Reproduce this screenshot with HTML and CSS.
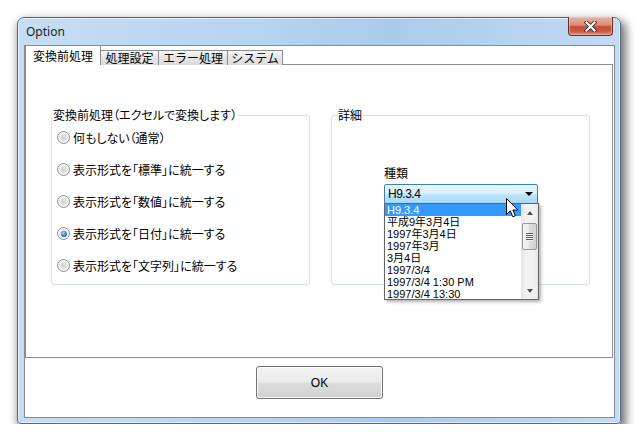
FILE: index.html
```html
<!DOCTYPE html>
<html lang="ja">
<head>
    <meta charset="UTF-8">
    <meta name="viewport" content="width=device-width, initial-scale=1.0">
    <title>Option</title>
    <link rel="stylesheet" href="styles.css">
</head>
<body>
    <div class="window">
        <div class="titlebar">
            <span class="title">Option</span>
            <span class="close">
                <svg width="13" height="11" viewBox="0 0 13 11">
                    <path d="M2.5 1.5 L10.5 9.5 M10.5 1.5 L2.5 9.5" stroke="#3b3b3b" stroke-width="4" stroke-linecap="square"/>
                    <path d="M2.5 1.5 L10.5 9.5 M10.5 1.5 L2.5 9.5" stroke="#fff" stroke-width="2" stroke-linecap="square"/>
                </svg>
            </span>
        </div>
        <div class="client">
            <div class="tabs">
                <div class="tab active" style="width:76px">変換前処理</div>
                <div class="tab" style="width:59px">処理設定</div>
                <div class="tab" style="width:70px">エラー処理</div>
                <div class="tab" style="width:56px">システム</div>
            </div>
            <div class="panel">
                <fieldset class="group group-mode">
                    <legend>変換前処理（エクセルで変換します）</legend>
                    <label class="option"><span class="radio"></span>何もしない（通常）</label>
                    <label class="option"><span class="radio"></span>表示形式を「標準」に統一する</label>
                    <label class="option"><span class="radio"></span>表示形式を「数値」に統一する</label>
                    <label class="option"><span class="radio on"></span>表示形式を「日付」に統一する</label>
                    <label class="option"><span class="radio"></span>表示形式を「文字列」に統一する</label>
                </fieldset>
                <fieldset class="group group-detail">
                    <legend>詳細</legend>
                    <div class="field-label">種類</div>
                    <div class="combo">
                        <div class="combo-box"><span>H9.3.4</span><span class="arrow"></span></div>
                        <div class="dropdown">
                            <ul class="items">
                                <li class="selected">H9.3.4</li>
                                <li>平成9年3月4日</li>
                                <li>1997年3月4日</li>
                                <li>1997年3月</li>
                                <li>3月4日</li>
                                <li>1997/3/4</li>
                                <li>1997/3/4 1:30 PM</li>
                                <li>1997/3/4 13:30</li>
                            </ul>
                            <div class="scrollbar">
                                <div class="sb-btn"><span class="tri-up"></span></div>
                                <div class="sb-thumb"><span class="grip"></span></div>
                                <div class="sb-track"></div>
                                <div class="sb-btn"><span class="tri-down"></span></div>
                            </div>
                        </div>
                        <svg class="cursor" width="13" height="20" viewBox="0 0 13 20">
                            <path d="M0.5 0.5 V16.5 L4.3 12.8 L6.8 18.8 L9.3 17.8 L6.9 12 H11.8 Z" fill="#fff" stroke="#000" stroke-width="1" stroke-linejoin="miter"/>
                        </svg>
                    </div>
                </fieldset>
            </div>
            <div class="footer">
                <button class="ok">OK</button>
            </div>
        </div>
    </div>
</body>
</html>
```

FILE: styles.css
```css
* {
    box-sizing: border-box;
}
body {
    margin: 0;
    background: #fff;
    font-family: "Noto Sans CJK JP", sans-serif;
    font-size: 12px;
    color: #000;
}
.window {
    width: 604px;
    height: 407px;
    margin: 17px 0 0 17px;
    padding: 0 5px 5px 6px;
    display: flex;
    flex-direction: column;
    border: 1px solid #56687b;
    border-radius: 7px 7px 4px 4px;
    background: linear-gradient(to right, #c6ddf3, #b7d4f0 40%, #a9cbec 62%, #c3dbf3);
    box-shadow: 3px 5px 10px 2px rgba(0, 0, 0, .55), inset 0 0 0 1px rgba(255, 255, 255, .6);
}
.titlebar {
    height: 27px;
    display: flex;
    justify-content: space-between;
    align-items: flex-start;
}
.title {
    padding-left: 2px;
    line-height: 27px;
    font-family: "Noto Sans", sans-serif;
    font-size: 12px;
    color: #1b1b1b;
}
.close {
    width: 45px;
    height: 19px;
    margin: -1px 2px 0 0;
    display: flex;
    align-items: center;
    justify-content: center;
    border: 1px solid #6e2b1f;
    border-top: none;
    border-radius: 0 0 4px 4px;
    background: linear-gradient(#eab0a2 0%, #dc8c79 45%, #c55239 52%, #c8573d 78%, #e3917a 100%);
    box-shadow: inset 0 0 0 1px rgba(255, 220, 210, .45);
}
.client {
    flex: 1;
    display: flex;
    flex-direction: column;
    border: 1px solid #8a8a8a;
    background: #fff;
}
.tabs {
    height: 19px;
    margin-bottom: -1px;
    display: flex;
    align-items: flex-end;
    position: relative;
    z-index: 1;
}
.tab {
    height: 15px;
    margin-left: -1px;
    display: flex;
    align-items: center;
    justify-content: center;
    line-height: 12px;
    border: 1px solid #898c95;
    border-bottom: none;
    background: linear-gradient(#f6f6f6, #e6e6e6 45%, #dcdcdc);
}
.tab.active {
    height: 19px;
    margin-left: 0;
    border-top: none;
    background: #fff;
}
.panel {
    width: 588px;
    height: 294px;
    padding: 44px 0 0 25px;
    display: flex;
    align-items: flex-start;
    gap: 21px;
    border: 1px solid #898c95;
    background: #fff;
}
.group {
    width: 259px;
    height: 176px;
    margin: 0;
    padding: 0;
    min-inline-size: 0;
    border: 1px solid #d5dfe5;
    border-radius: 3px;
}
.group legend {
    padding: 0 1px;
    line-height: 12px;
    font-size: 12px;
}
.group-mode {
    padding-top: 10px;
}
.group-mode legend {
    font-feature-settings: "palt";
}
.group-detail {
    padding-top: 46px;
}
.group-detail legend {
    margin-left: 5px;
}
.option {
    height: 13px;
    margin: 0 0 19px 5px;
    display: flex;
    align-items: center;
    gap: 3px;
    line-height: 13px;
    font-feature-settings: "palt";
    white-space: nowrap;
}
.radio {
    width: 13px;
    height: 13px;
    flex: none;
    display: flex;
    align-items: center;
    justify-content: center;
    border: 1px solid #8e9092;
    border-radius: 50%;
    background: radial-gradient(circle, #d2d2d2 0, #dedede 2.5px, #ececec 4px, #fbfbfb 5.5px);
}
.radio.on::after {
    content: "";
    width: 6px;
    height: 6px;
    border-radius: 50%;
    background: radial-gradient(circle at 40% 35%, #a9d8fa 0, #3d8be0 45%, #0d4aa0 100%);
}
.field-label {
    margin-left: 52px;
    line-height: 12px;
}
.combo {
    width: 154px;
    height: 20px;
    margin: 5px 0 0 52px;
    position: relative;
}
.combo-box {
    height: 20px;
    padding: 0 4px 0 3px;
    display: flex;
    align-items: center;
    justify-content: space-between;
    border: 1px solid #3c7fb1;
    border-radius: 2px;
    background: linear-gradient(#eaf6fd 0%, #d9f0fc 48%, #bee6fd 52%, #a7d9f5 100%);
    font-family: "Liberation Sans", "Noto Sans CJK JP", sans-serif;
    letter-spacing: -.5px;
}
.arrow {
    width: 0;
    height: 0;
    border-left: 4px solid transparent;
    border-right: 4px solid transparent;
    border-top: 4px solid #000;
}
.dropdown {
    position: absolute;
    left: 0;
    top: 19px;
    width: 155px;
    height: 97px;
    display: flex;
    border: 1px solid #646464;
    background: #fff;
    box-shadow: 2px 2px 3px rgba(0, 0, 0, .3);
    z-index: 2;
}
.items {
    flex: 1;
    margin: 0;
    padding: 0;
    list-style: none;
    overflow: hidden;
    font-family: "Liberation Sans", "Noto Sans CJK JP", sans-serif;
    font-size: 11px;
}
.items li {
    height: 12px;
    padding-left: 2px;
    line-height: 12px;
    white-space: nowrap;
}
.items li.selected {
    background: #3399ff;
    color: #fff;
}
.scrollbar {
    width: 17px;
    display: flex;
    flex-direction: column;
    background: linear-gradient(to right, #e4e4e4, #f2f2f2 30%, #f2f2f2 70%, #e8e8e8);
}
.sb-btn {
    height: 17px;
    display: flex;
    align-items: center;
    justify-content: center;
}
.tri-up {
    border-left: 3.5px solid transparent;
    border-right: 3.5px solid transparent;
    border-bottom: 4px solid #505050;
}
.tri-down {
    border-left: 3.5px solid transparent;
    border-right: 3.5px solid transparent;
    border-top: 4px solid #505050;
}
.sb-thumb {
    height: 27px;
    margin: 2px 1px 0;
    display: flex;
    align-items: center;
    justify-content: center;
    border: 1px solid #979797;
    border-radius: 2px;
    background: linear-gradient(to right, #f4f4f4, #e9e9e9 50%, #dcdcdc 50%, #d2d2d2);
}
.grip {
    width: 7px;
    height: 8px;
    background: repeating-linear-gradient(to bottom, #5e5e5e 0 1px, #f4f4f4 1px 2px);
}
.sb-track {
    flex: 1;
}
.cursor {
    position: absolute;
    left: 122px;
    top: 14px;
    z-index: 3;
}
.footer {
    flex: 1;
    display: flex;
    justify-content: center;
    align-items: flex-start;
    padding-top: 8px;
}
.ok {
    width: 127px;
    height: 33px;
    border: 1px solid #707070;
    border-radius: 3px;
    background: linear-gradient(#f2f2f2 0%, #ebebeb 48%, #dddddd 52%, #cfcfcf 100%);
    box-shadow: inset 0 0 0 1px #fbfbfb;
    font-family: "Liberation Sans", sans-serif;
    font-size: 12px;
    color: #000;
}
```
